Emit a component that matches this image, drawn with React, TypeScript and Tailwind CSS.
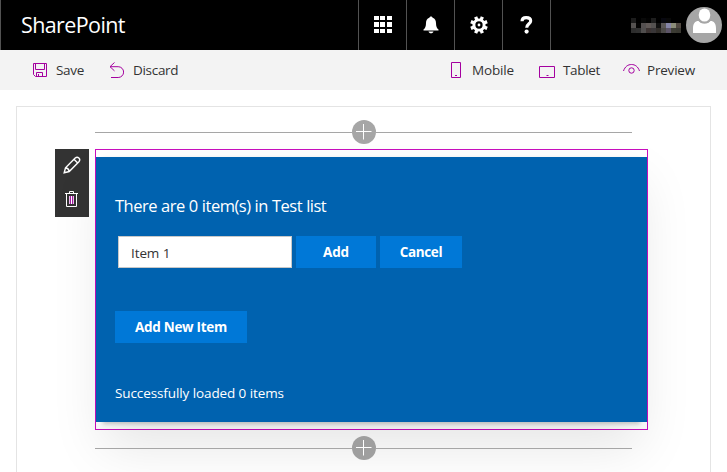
import type { ReactNode } from "react";

const PURPLE = "#a4009f";

function Waffle() {
  return (
    <svg width="18" height="18" viewBox="0 0 18 18" fill="#fff" shapeRendering="crispEdges">
      {[0, 6, 13].map((y) => [0, 6, 13].map((x) => <rect key={`${x}-${y}`} x={x} y={y} width="5" height={y === 6 ? 5 : 4} />))}
    </svg>
  );
}

function Bell() {
  return (
    <svg width="16" height="18" viewBox="0 0 16 18" fill="#fff">
      <path d="M8 0.500c.9 0 1.500.6 1.600 1.300C12 2.500 13 4.600 13 7c0 3.500.8 5 2.500 6.600V14.500H.5v-.9C2.200 12 3 10.500 3 7c0-2.400 1-4.500 3.400-5.200C6.500 1.100 7.100.5 8 .5zM5.500 15.500h5c-.3 1.200-1.200 1.800-2.500 1.800s-2.200-.6-2.500-1.800z" />
    </svg>
  );
}

function Gear() {
  return (
    <svg width="18" height="18" viewBox="0 0 18 18" fill="none" stroke="#fff">
      <circle cx="9" cy="9" r="5.100" strokeWidth="2.900" />
      <circle cx="9" cy="9" r="1.400" fill="#fff" strokeWidth="0" />
      {[22.5, 67.5, 112.5, 157.5, 202.5, 247.5, 292.5, 337.5].map((a) => (
        <path key={a} d="M9 0.200V3.500" strokeWidth="3.300" transform={`rotate(${a} 9 9)`} />
      ))}
    </svg>
  );
}

function HeaderCell({ children }: { children: ReactNode }) {
  return <div className="flex h-full w-12 items-center justify-center border-l border-[#525252]">{children}</div>;
}

function Avatar() {
  return (
    <svg width="36" height="36" viewBox="0 0 36 36">
      <circle cx="18" cy="18" r="18" fill="#a6a6a6" />
      <ellipse cx="18.500" cy="8" rx="5.800" ry="6.600" fill="#fff" />
      <path d="M7 26v-4.500c0-5 2-7.500 5.500-7.500 1.500 1.700 3.500 2.500 6 2.500s4.500-.8 6-2.500c3.500 0 5.500 2.500 5.500 7.500V26z" fill="#fff" />
      <path d="M12.500 13.400c1.300 1.900 3.400 2.700 6 2.700s4.700-.8 6-2.700" fill="none" stroke="#a6a6a6" strokeWidth=".7" />
    </svg>
  );
}

const mosaic = [
  ["#1c1c1c", "#000", "#090909", "#030303", "#1d1d1d", "#000", "#080810", "#090909", "#000", "#000"],
  ["#555251", "#040404", "#545050", "#605957", "#555251", "#111", "#5b5857", "#8585a8", "#8b8c78", "#504841"],
  ["#2d2d2d", "#303030", "#504e4e", "#3c3332", "#393638", "#302c28", "#4c4a48", "#5c5467", "#3c3c34", "#393831"],
];

function HiddenName() {
  return (
    <div className="grid w-[50px] grid-cols-10">
      {mosaic.flat().map((c, i) => (
        <span key={i} className="h-[5px]" style={{ backgroundColor: c }} />
      ))}
    </div>
  );
}

function AddZone({ tone }: { tone: string }) {
  return (
    <div className="flex h-6 w-[537px] items-center">
      <span className="h-px w-[257px] bg-[#a6a6a6]" />
      <svg width="24" height="24" viewBox="0 0 24 24">
        <circle cx="12" cy="12" r="12" fill={tone} />
        <path d="M4 11.500H19.500M11.500 4V19.500" stroke="#fff" />
      </svg>
      <span className="h-px flex-1 bg-[#a6a6a6]" />
    </div>
  );
}

export default function App() {
  return (
    <div className="flex h-[472px] w-[727px] flex-col overflow-hidden bg-white font-['Open_Sans',sans-serif] text-[#333]">
      <header className="flex h-[50px] shrink-0 items-center border-l border-[#525252] bg-black text-white">
        <div className="w-[357px] pl-5 text-[21.500px] tracking-[-0.6px] whitespace-nowrap">SharePoint</div>
        <HeaderCell><Waffle /></HeaderCell>
        <HeaderCell><Bell /></HeaderCell>
        <HeaderCell><Gear /></HeaderCell>
        <HeaderCell>
          <svg width="13" height="18" viewBox="0 0 13 18" fill="none" stroke="#fff">
            <path d="M2 5.200C2 2.500 3.600 1.600 6.200 1.600S10.700 2.600 10.700 5C10.700 7.700 6.700 8 6.700 11.800" strokeWidth="3.100" />
            <circle cx="6.600" cy="15.600" r="2.100" fill="#fff" strokeWidth="0" />
          </svg>
        </HeaderCell>
        <div className="flex h-full flex-1 items-center border-l border-[#525252] pl-20">
          <HiddenName />
          <span className="ml-[5px]"><Avatar /></span>
        </div>
      </header>

      <nav className="flex h-10 shrink-0 items-center bg-[#f3f3f3] pl-[33px] text-[13.500px] leading-5 whitespace-nowrap">
        <svg width="14" height="14" viewBox="0 0 14 14" fill="none" stroke={PURPLE}>
          <path d="M.5.5h13v13H2.500l-2-2zM2.500.5v6h9v-6M3.500 13.500V9.500h6v4M5.500 11v2.500" />
        </svg>
        <span className="ml-[9px] w-[53px] tracking-[-0.3px]">Save</span>
        <svg width="15" height="17" viewBox="0 0 15 17" fill="none" stroke={PURPLE}>
          <path d="M5.500.5L1 4.700l4.500 4.200M1 4.700h8.200a5.400 5.400 0 0 1 0 10.800H2" />
        </svg>
        <span className="ml-[9px] w-[318px] tracking-[-0.3px]">Discard</span>
        <svg width="11" height="16" viewBox="0 0 11 16" fill="none" stroke={PURPLE}>
          <path d="M.5.500h9v15h-9zM4 13.500h2" />
        </svg>
        <span className="ml-[10px] w-[67px] tracking-[-0.15px]">Mobile</span>
        <svg className="mt-1" width="16" height="12" viewBox="0 0 16 12" fill="none" stroke={PURPLE}>
          <path d="M.5.5h15v11H.5zM7.500 9.500h2" />
        </svg>
        <span className="ml-2 w-[60px] tracking-[-0.35px]">Tablet</span>
        <svg className="-mt-0.5" width="17" height="10" viewBox="0 0 17 10" fill="none" stroke={PURPLE}>
          <path d="M.5 7C2 2.500 5 .5 8.500.5s6.500 2 8 6.500" />
          <circle cx="8.500" cy="6.500" r="2.700" />
        </svg>
        <span className="ml-[7px] tracking-[-0.200px]">Preview</span>
      </nav>

      <main className="mt-4 ml-4 flex h-[400px] w-[695px] shrink-0 flex-col border border-[#e4e4e4] pt-[13px] pl-[38px]">
        <div className="pl-10"><AddZone tone="#a6a6a6" /></div>
        <div className="mt-[5px] flex items-start">
          <aside className="mr-1.5 flex h-[68px] w-[34px] flex-col items-center bg-[#333] pt-[7px]">
            <svg width="18" height="18" viewBox="0 0 18 18" fill="none" stroke="#fff" strokeWidth="1.400">
              <path d="M1.200 16.800l1.300-5L12.200 2.100c2.500-2.300 6 .9 3.700 3.700l-9.700 9.700zM2.500 11.800c1.800.2 3.400 1.900 3.700 3.700M11 3.300L14.700 7" />
            </svg>
            <svg className="mt-[17px]" width="14" height="16" viewBox="0 0 14 16" fill="none" stroke="#fff">
              <path d="M0 2.500h13M4.500 2.500v-2h4v2M1.500 2.500v13h10v-13" />
              <path d="M4.500 5v8M8.500 5v8" stroke="#f0b8f0" />
              <path d="M6.500 5v8" stroke="#fff" />
              <path d="M5.500 5v8M7.500 5v8" stroke="#a020a0" />
            </svg>
          </aside>
          <section className="h-[281px] w-[553px] border border-[#c80ebe] py-[7px]">
            <div className="mx-[7px] h-[265px] shadow-[0_2px_4px_rgba(0,0,0,0.2),0_25px_50px_rgba(0,0,0,0.1)]">
              <div className="-mx-[7px] flex h-full flex-col items-start bg-[#0062af] pl-[19px] text-white">
                <h1 className="mt-[37px] h-6 text-[16.500px] leading-6 tracking-[-0.5px] [word-spacing:0.3px] whitespace-nowrap">There are 0 item(s) in Test list</h1>
                <div className="mt-[18px] flex h-8 gap-1 pl-[3px] text-[13.500px]">
                  <input readOnly value="Item 1" className="h-8 w-[174px] border border-[#c8c8c8] bg-white pt-0.5 pl-3 tracking-[-0.1px] text-[#333] outline-none" />
                  <button className="w-20 bg-[#0078d7] font-bold tracking-[-0.2px]">Add</button>
                  <button className="w-[82px] bg-[#0078d7] font-bold tracking-[-0.4px]">Cancel</button>
                </div>
                <button className="mt-[43px] h-8 w-[132px] bg-[#0078d7] text-[13.500px] font-bold tracking-[-0.3px]">Add New Item</button>
                <p className="mt-10 text-[13.500px] leading-5 tracking-[-0.1px] whitespace-nowrap">Successfully loaded 0 items</p>
              </div>
            </div>
          </section>
        </div>
        <div className="mt-1.5 pl-10"><AddZone tone="#9f9f9f" /></div>
      </main>
    </div>
  );
}
